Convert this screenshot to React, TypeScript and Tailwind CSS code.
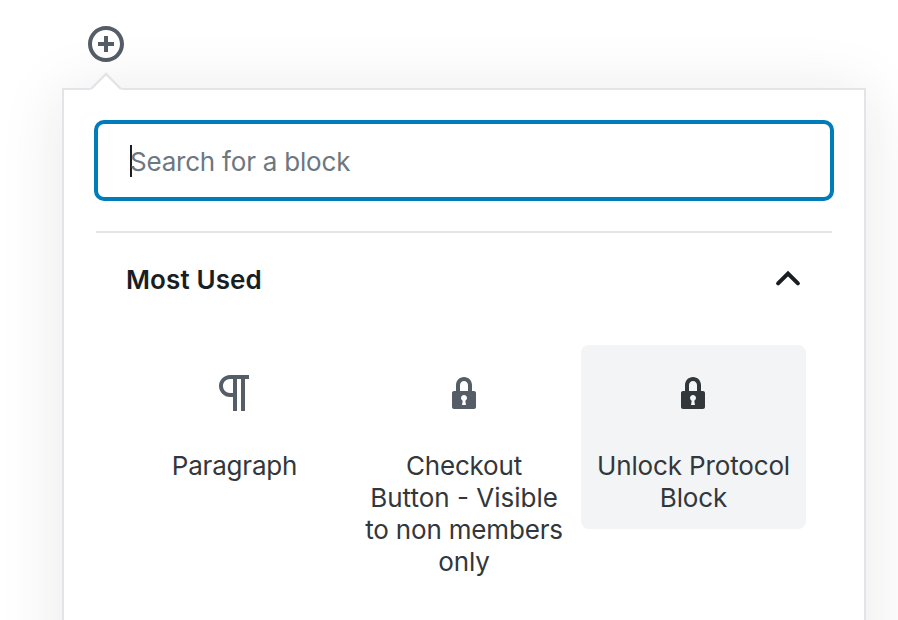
import React from "react";

const LockIcon = () => (
  <svg viewBox="0 0 20 20" className="h-10 w-10" fill="currentColor">
    <path d="M14 9h1c.55 0 1 .45 1 1v7c0 .55-.45 1-1 1H5c-.55 0-1-.45-1-1v-7c0-.55.45-1 1-1h1V6c0-2.21 1.79-4 4-4s4 1.79 4 4v3zm-2 0V6c0-1.1-.9-2-2-2s-2 .9-2 2v3h4zm-1 7l-.36-2.15c.51-.24.86-.75.86-1.35 0-.83-.67-1.5-1.5-1.5s-1.5.67-1.5 1.5c0 .6.35 1.11.86 1.35L9 16h2z" />
  </svg>
);

const ParagraphIcon = () => (
  <svg viewBox="0 0 24 24" className="h-12 w-12" fill="currentColor">
    <path d="M11 5v7H9.5C7.6 12 6 10.4 6 8.5S7.6 5 9.5 5H11m8-2H9.5C6.5 3 4 5.5 4 8.5S6.5 14 9.5 14H11v7h2V5h2v16h2V5h2V3z" />
  </svg>
);

interface BlockProps {
  icon: React.ReactNode;
  lines: { text: string; tracking: string }[];
  active?: boolean;
}

function Block({ icon, lines, active = false }: BlockProps) {
  return (
    <button
      className={`flex w-[225px] flex-col items-center rounded-lg pt-6 pb-[15px] ${
        active ? "bg-[#f3f4f5] text-[#32373c]" : "text-[#555d66]"
      }`}
    >
      <span className={`flex h-12 items-center justify-center ${active ? "pr-[1.5px]" : ""}`}>{icon}</span>
      <span className="mt-[33px] flex flex-col items-center text-[26px] leading-8 whitespace-nowrap text-[#32373c]">
        {lines.map((line) => (
          <span key={line.text} className={line.tracking}>
            {line.text}
          </span>
        ))}
      </span>
    </button>
  );
}

export default function App() {
  return (
    <main className="h-[620px] w-full overflow-hidden bg-white pt-6 font-['Inter','Liberation_Sans',sans-serif]">
      <button aria-label="Add block" className="ml-[86px] block h-10 w-10 text-[#555d66]">
        <svg viewBox="0 0 20 20" className="h-10 w-10" fill="currentColor">
          <path d="M10 1c-5 0-9 4-9 9s4 9 9 9 9-4 9-9-4-9-9-9zm0 16c-3.9 0-7-3.1-7-7s3.1-7 7-7 7 3.1 7 7-3.1 7-7 7zm1-11H9v3H6v2h3v3h2v-3h3V9h-3V6z" />
        </svg>
      </button>
      <section className="relative mt-6 ml-[62px] h-[700px] w-[804px] border-2 border-[#e2e4e7] bg-white px-[30px] pt-[30px] shadow-[0_6px_60px_rgba(25,30,35,0.1)]">
        <svg className="absolute -top-[18px] left-[26px] h-[18px] w-8" viewBox="0 0 32 18">
          <path d="M0 18L16 2L32 18Z" fill="white" />
          <path d="M1 17L16 2L31 17" fill="none" stroke="#e2e4e7" strokeWidth="2.4" />
        </svg>
        <div className="flex h-[81px] w-[740px] items-center rounded-[10px] border-4 border-[#007cba] pl-8">
          <span className="h-8 w-0.5 bg-[#191e23]" />
          <span className="-ml-0.5 pt-0.5 text-[26px] leading-8 tracking-[-0.21px] text-[#6c7781]">
            Search for a block
          </span>
        </div>
        <div className="mx-0.5 mt-[30px] border-t-2 border-[#e2e4e7]">
          <h2 className="flex h-[94px] items-center justify-between pr-5 pl-[30px] text-[26px] leading-8 font-semibold text-[#191e23]">
            <span className="tracking-[0.12px]">Most Used</span>
            <svg viewBox="0 0 48 48" className="mb-0.5 h-12 w-12" fill="none">
              <path
                d="M14.1 28.4L24 18.5L33.9 28.4"
                stroke="currentColor"
                strokeWidth="4"
                strokeLinecap="round"
              />
            </svg>
          </h2>
        </div>
        <div className="mt-[18px] ml-7 flex items-start gap-[4.5px]">
          <Block icon={<ParagraphIcon />} lines={[{ text: "Paragraph", tracking: "tracking-[-0.2px]" }]} />
          <Block
            icon={<LockIcon />}
            lines={[
              { text: "Checkout", tracking: "tracking-[-0.2px]" },
              { text: "Button - Visible", tracking: "tracking-normal" },
              { text: "to non members", tracking: "tracking-[-0.18px]" },
              { text: "only", tracking: "tracking-[-0.1px]" },
            ]}
          />
          <Block
            active
            icon={<LockIcon />}
            lines={[
              { text: "Unlock Protocol", tracking: "tracking-[-0.14px]" },
              { text: "Block", tracking: "tracking-[-0.1px]" },
            ]}
          />
        </div>
      </section>
    </main>
  );
}
